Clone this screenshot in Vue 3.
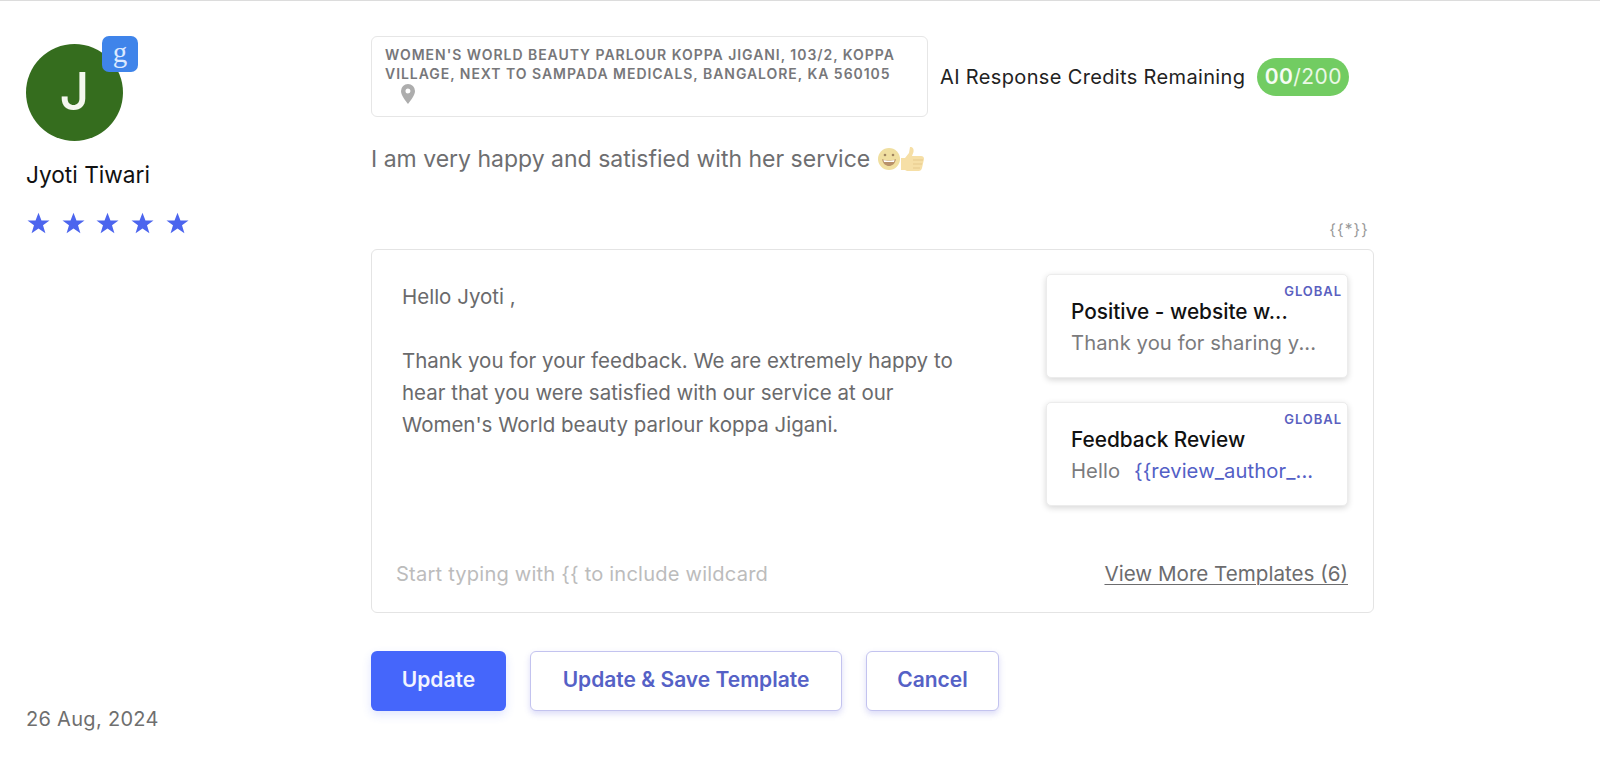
<script setup>
const stars = [1, 2, 3, 4, 5]
const lines = [
  'Thank you for your feedback. We are extremely happy to',
  'hear that you were satisfied with our service at our',
  "Women's World beauty parlour koppa Jigani."
]
const open = String.fromCharCode(123, 123)
const close = String.fromCharCode(125, 125)
const wildText = open + '*' + close
const authorVar = open + 'review_author_...'
const hintText = 'Start typing with ' + open + ' to include wildcard'
</script>

<template>
  <div class="page">
    <aside class="author">
      <div class="avatar-wrap">
        <div class="avatar">J</div>
        <div class="badge">g</div>
      </div>
      <div class="name">Jyoti Tiwari</div>
      <div class="stars">
        <svg v-for="s in stars" :key="s" class="star" viewBox="0 0 24 24"><path d="M12 .8l3.1 8h8.4l-6.8 5.1 2.5 8.4L12 17.2l-7.2 5.1 2.5-8.4L.5 8.800h8.400z" /></svg>
      </div>
      <div class="date">26 Aug, 2024</div>
    </aside>

    <main class="main">
      <div class="top">
        <div class="address">
          <div>WOMEN'S WORLD BEAUTY PARLOUR KOPPA JIGANI, 103/2, KOPPA VILLAGE, NEXT TO SAMPADA MEDICALS, BANGALORE, KA 560105</div>
          <svg class="pin" viewBox="0 0 14 20"><path fill-rule="evenodd" d="M7 0a7 7 0 0 1 7 7c0 4.500-4.700 9.800-7 13C4.700 16.800 0 11.500 0 7a7 7 0 0 1 7-7zm0 4.500a2.500 2.500 0 1 0 0 5 2.500 2.500 0 0 0 0-5z" /></svg>
        </div>
        <span class="credits-label">AI Response Credits Remaining</span>
        <span class="pill"><b>00</b>/200</span>
      </div>

      <div class="review">
        <span>I am very happy and satisfied with her service</span>
        <svg class="emoji" viewBox="0 0 50 26">
          <circle cx="12" cy="13" r="11" fill="#f0dfa0" />
          <path d="M5 13c4 2 10 2 14 0-1 5-4 7-7 7s-6-2-7-7z" fill="#b8916a" />
          <path d="M6.500 14c3 1 8 1 11 0l-.5 2H7z" fill="#fff" />
          <circle cx="8" cy="9" r="1.300" fill="#a08560" /><circle cx="16" cy="9" r="1.300" fill="#a08560" />
          <path d="M24 12h4l4-5 1-6c3 0 4 2 3.500 5L35 10h9c2 0 3 1 3 3l-2 9c-.5 2-1.500 3-3.500 3H30l-2-1h-4z" fill="#f6dfa6" />
          <path d="M36 14h10M36 18h9M36 22h7" stroke="#e6c98c" stroke-width="1" fill="none" />
        </svg>
      </div>

      <div class="wild" v-text="wildText"></div>

      <section class="editor">
        <div class="editor-body">
          <div class="message">
            <p class="hello">Hello Jyoti ,</p>
            <p v-for="l in lines" :key="l" v-text="l"></p>
          </div>
          <div class="templates">
            <article class="tpl">
              <span class="global">GLOBAL</span>
              <h4>Positive - website w...</h4>
              <p>Thank you for sharing y...</p>
            </article>
            <article class="tpl">
              <span class="global">GLOBAL</span>
              <h4>Feedback Review</h4>
              <p>Hello <i v-text="authorVar"></i></p>
            </article>
          </div>
        </div>
        <div class="editor-foot">
          <span class="hint" v-text="hintText"></span>
          <a class="more">View More Templates (6)</a>
        </div>
      </section>

      <div class="actions">
        <button class="btn primary">Update</button>
        <button class="btn ghost save">Update &amp; Save Template</button>
        <button class="btn ghost cancel">Cancel</button>
      </div>
    </main>
  </div>
</template>

<style>
html, body { margin: 0; background: #fff; }
</style>

<style scoped>
.page {
  box-sizing: border-box;
  width: 1600px;
  height: 760px;
  border-top: 1px solid #dcdcdc;
  display: flex;
  font-family: Inter, "Liberation Sans", sans-serif;
  overflow: hidden;
  background: #fff;
}
.author {
  box-sizing: border-box;
  width: 371px;
  padding: 43px 0 0 26px;
  display: flex;
  flex-direction: column;
  flex-shrink: 0;
}
.avatar-wrap { position: relative; width: 97px; height: 97px; }
.avatar {
  box-sizing: border-box;
  width: 97px; height: 97px; border-radius: 50%;
  background: #356d1e; color: #f4f7ef;
  display: flex; align-items: center; justify-content: center;
  font-size: 52px; font-weight: 500;
  padding-bottom: 2px;
}
.badge {
  position: absolute; left: 76px; top: -8px;
  width: 36px; height: 36px; border-radius: 7px;
  background: #3f84ea; color: #dbe9ff;
  display: flex; align-items: center; justify-content: center;
  font: 29px/30px "Liberation Serif", serif;
  box-sizing: border-box;
  padding-bottom: 4px;
}
.name { margin-top: 19px; font-size: 22.7px; line-height: 30px; color: #111; }
.stars { display: flex; gap: 11.700px; margin-top: 22px; margin-left: 1px; }
.star { width: 23px; height: 23px; fill: #4c65ee; display: block; }
.date { margin-top: auto; margin-bottom: 28px; font-size: 20px; line-height: 26px; color: #6f6f6f; letter-spacing: .3px; }

.main { width: 1003px; display: flex; flex-direction: column; padding-top: 35px; }
.top { display: flex; align-items: center; }
.address {
  box-sizing: border-box;
  width: 557px; height: 81px;
  border: 1px solid #e6e6e6; border-radius: 6px;
  padding: 9px 12px 0 13px;
  font-size: 14px; line-height: 18.500px; font-weight: 600;
  letter-spacing: .96px; color: #77777a;
}
.pin { display: block; width: 14px; height: 20px; margin: 1px 0 0 16px; fill: #adadad; }
.credits-label { margin-left: 12px; font-size: 20px; color: #222; letter-spacing: .35px; white-space: nowrap; }
.pill {
  margin-left: 12px;
  width: 92px; height: 38px; border-radius: 19px;
  background: #72cc62; color: #eaf8e6;
  display: flex; align-items: center; justify-content: center;
  font-size: 21px; letter-spacing: .4px;
}
.pill b { font-weight: 600; color: #f6fcf4; }
.review {
  display: flex; align-items: center;
  margin-top: 24px; height: 36px;
  font-size: 23px; color: #6e6e70;
}
.emoji { width: 50px; height: 26px; margin-left: 7px; filter: blur(.4px); }
.wild {
  align-self: flex-end; margin: 43px 5px 0 0;
  font-size: 15.500px; line-height: 20px; letter-spacing: 1.100px; color: #999;
}
.editor {
  box-sizing: border-box;
  margin-top: 9px;
  width: 1003px; height: 364px;
  border: 1px solid #e4e4e4; border-radius: 6px;
  display: flex; flex-direction: column;
}
.editor-body { display: flex; justify-content: space-between; padding: 24px 25px 0 30px; flex: 1; }
.message { margin-top: 7px; font-size: 20.500px; line-height: 32px; color: #6a6a6c; }
.message p { margin: 0; white-space: nowrap; }
.message .hello { margin: 0 0 32px; }
.templates { display: flex; flex-direction: column; gap: 24px; }
.tpl {
  position: relative;
  box-sizing: border-box;
  width: 302px; height: 104px;
  border-radius: 5px; border: 1px solid #ececec;
  background: #fff;
  box-shadow: 0 2px 6px rgba(0, 0, 0, .16);
  padding: 24px 10px 0 24px;
}
.global {
  position: absolute; right: 5px; top: 8px;
  font-size: 13px; line-height: 16px; font-weight: 600; letter-spacing: .95px; color: #5a60c0;
}
.tpl h4 { margin: 0; font-size: 20.800px; line-height: 26px; font-weight: 500; color: #111; white-space: nowrap; }
.tpl p { margin: 5px 0 0; font-size: 20.200px; line-height: 26px; color: #7b7b7d; letter-spacing: .1px; white-space: nowrap; }
.tpl i { font-style: normal; color: #5360c6; margin-left: 8px; }
.editor-foot {
  display: flex; justify-content: space-between; align-items: center;
  padding: 0 25px 25px 24px; height: 26px;
}
.hint { font-size: 20.100px; color: #bcbcbc; letter-spacing: .2px; }
.more { font-size: 20.600px; color: #6c6c6e; text-decoration: underline; text-decoration-thickness: 1px; text-underline-offset: 3px; margin-top: -2px; }
.actions { display: flex; margin-top: 38px; }
.btn {
  box-sizing: border-box; height: 60px;
  font-family: inherit; font-size: 21px; font-weight: 600;
  border-radius: 6px; padding: 0 0 3px;
}
.primary {
  width: 135px; background: #4566fb; color: #f2f4ff; border: none;
  box-shadow: 0 4px 10px rgba(69, 102, 251, .16);
}
.ghost {
  background: #fff; color: #5561c6;
  border: 1px solid #c3c3ef;
  box-shadow: 0 3px 6px rgba(90, 90, 220, .22);
}
.save { width: 312px; margin-left: 24px; }
.cancel { width: 133px; margin-left: 24px; }
</style>
